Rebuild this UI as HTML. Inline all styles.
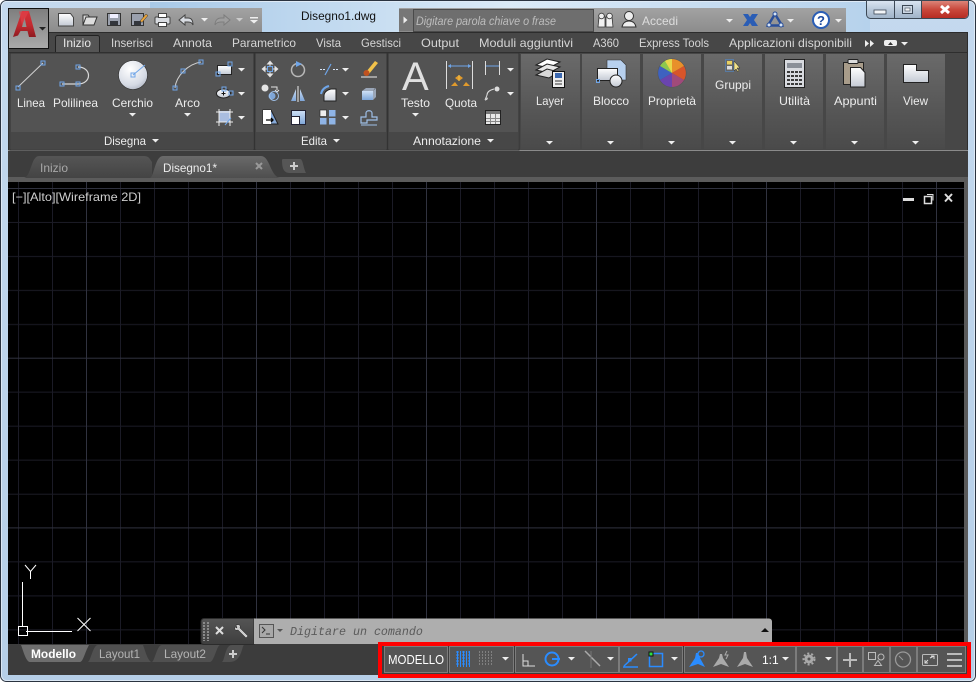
<!DOCTYPE html>
<html><head><meta charset="utf-8"><style>
html,body{margin:0;padding:0;background:#fff;width:976px;height:682px;overflow:hidden}
svg{display:block}
text{font-family:"Liberation Sans",sans-serif;font-size:12px;fill:#ececec}
.t{fill:#d6d6d6}
.d{fill:#b4b4b4}
</style></head><body>
<svg width="976" height="682" viewBox="0 0 976 682" xmlns="http://www.w3.org/2000/svg">
<defs>
<linearGradient id="frame" x1="0" y1="0" x2="0" y2="1"><stop offset="0" stop-color="#c4d9ee"/><stop offset="1" stop-color="#b6cfe8"/></linearGradient>
<linearGradient id="tb" x1="0" y1="0" x2="1" y2="0"><stop offset="0" stop-color="#a8c9e8"/><stop offset=".5" stop-color="#dbeaf7"/><stop offset="1" stop-color="#b6d2ec"/></linearGradient>
<linearGradient id="qa" x1="0" y1="0" x2="0" y2="1"><stop offset="0" stop-color="#a2a2a2"/><stop offset="1" stop-color="#8c8c8c"/></linearGradient>
<linearGradient id="abtn" x1="0" y1="0" x2="0" y2="1"><stop offset="0" stop-color="#7e7e7e"/><stop offset="1" stop-color="#aaaaaa"/></linearGradient>
<linearGradient id="panel" x1="0" y1="0" x2="0" y2="1"><stop offset="0" stop-color="#6a6a6a"/><stop offset=".6" stop-color="#565656"/><stop offset="1" stop-color="#4a4a4a"/></linearGradient>
<linearGradient id="tabA" x1="0" y1="0" x2="0" y2="1"><stop offset="0" stop-color="#6a6a6a"/><stop offset="1" stop-color="#4e4e4e"/></linearGradient>
<linearGradient id="tabI" x1="0" y1="0" x2="0" y2="1"><stop offset="0" stop-color="#555"/><stop offset="1" stop-color="#444"/></linearGradient>
<linearGradient id="paper" x1="0" y1="0" x2="0" y2="1"><stop offset="0" stop-color="#fff"/><stop offset="1" stop-color="#c4cad4"/></linearGradient>
<linearGradient id="blue" x1="0" y1="0" x2="0" y2="1"><stop offset="0" stop-color="#cfe0f5"/><stop offset="1" stop-color="#7ea6d8"/></linearGradient>
<radialGradient id="disc" cx=".4" cy=".3" r=".8"><stop offset="0" stop-color="#fff"/><stop offset=".7" stop-color="#d5dae4"/><stop offset="1" stop-color="#a8aebb"/></radialGradient>
<linearGradient id="red" x1="0" y1="0" x2="0" y2="1"><stop offset="0" stop-color="#d8323a"/><stop offset=".55" stop-color="#c22a30"/><stop offset="1" stop-color="#8e1a20"/></linearGradient>
<linearGradient id="winb" x1="0" y1="0" x2="0" y2="1"><stop offset="0" stop-color="#dbe6f2"/><stop offset=".5" stop-color="#b9c9da"/><stop offset="1" stop-color="#9fb3c8"/></linearGradient>
<linearGradient id="closeb" x1="0" y1="0" x2="0" y2="1"><stop offset="0" stop-color="#dc8478"/><stop offset=".5" stop-color="#c9483c"/><stop offset="1" stop-color="#b72c22"/></linearGradient>
<linearGradient id="cmdh" x1="0" y1="0" x2="0" y2="1"><stop offset="0" stop-color="#555"/><stop offset="1" stop-color="#3e3e3e"/></linearGradient>
<pattern id="grid" x="18" y="188" width="170" height="169.7" patternUnits="userSpaceOnUse">
<path d="M.5 0V170M34.5 0V170M68.5 0V170M102.5 0V170M136.5 0V170" stroke="#1b1b26" fill="none"/>
<path d="M0 .5H170M0 34.5H170M0 68.5H170M0 102.5H170M0 136.5H170" stroke="#1b1b26" fill="none"/>
<path d="M68.5 0V170" stroke="#30323f" fill="none"/>
<path d="M0 .5H170" stroke="#30323f" fill="none"/>
</pattern>
<g id="dd"><path d="M0 0h7l-3.500 3.500z" fill="#eee"/></g>
<g id="hq"><rect x="-2" y="-2" width="4" height="4" fill="none" stroke="#6fa5e8" stroke-width="1"/></g>
</defs>

<!-- window frame -->
<rect x="0.500" y="0.500" width="975" height="681" rx="6" fill="url(#frame)" stroke="#2a3340"/>
<rect x="1.500" y="1.500" width="973" height="679" rx="5" fill="none" stroke="#e9f1f9" stroke-opacity=".7"/>
<rect x="150" y="2" width="720" height="30" fill="url(#tb)"/>

<!-- main dark client -->
<rect x="8" y="32" width="960" height="643" fill="#3c3c3c"/>
<!-- QAT bar -->
<path d="M46 8H262V32H46z" fill="url(#qa)"/>
<!-- search / right bar -->
<rect x="399" y="8" width="447" height="24" fill="url(#qa)"/>
<rect x="399" y="9" width="14" height="22" fill="#777"/>
<path d="M403.500 16.500l4 3.500-4 3.500z" fill="#eee"/>
<rect x="413.500" y="9.500" width="180" height="22" fill="#6e6e6e" stroke="#4a4a4a"/>
<text x="416" y="25" textLength="140" lengthAdjust="spacingAndGlyphs" style="fill:#bdbdbd;font-style:italic">Digitare parola chiave o frase</text>
<text x="301" y="20" textLength="75" lengthAdjust="spacingAndGlyphs" style="fill:#111">Disegno1.dwg</text>

<!-- QAT icons -->
<path d="M58.500 13.500h12l3 4v8.500h-15z" fill="url(#paper)" stroke="#444"/>
<path d="M83 25l3-8h11l-3 8zM83 25v-10h5l1.500 2" fill="#ddd" stroke="#333"/>
<rect x="107.500" y="13.500" width="13" height="12" fill="#9aa0ad" stroke="#333"/><rect x="110" y="14" width="8" height="4" fill="#eef"/><rect x="110" y="21" width="8" height="4" fill="#33363c"/>
<rect x="131.500" y="13.500" width="12" height="12" fill="#9aa0ad" stroke="#333"/><rect x="134" y="21" width="7" height="4" fill="#33363c"/><path d="M140 21l6-7 2 1.500-6 7z" fill="#e8a33a" stroke="#333" stroke-width=".5"/>
<rect x="155" y="17" width="15" height="7" rx="1" fill="#d8dbe0" stroke="#444"/><rect x="158.500" y="13.500" width="8" height="4" fill="#fff" stroke="#444"/><rect x="158.500" y="22.500" width="8" height="4" fill="#fff" stroke="#444"/>
<path d="M179 20l6-5v3h3c4 0 5 3 5 7-1-2-2-3-5-3h-3v3z" fill="#d8dce2" stroke="#444"/>
<path d="M230 20l-6-5v3h-3c-4 0-6 3-6 7 1-2 3-3 6-3h3v3z" fill="#9e9e9e" stroke="#7d7d7d"/>
<use href="#dd" x="201" y="18"/><use href="#dd" x="236" y="18" opacity=".6"/>
<path d="M250 17h8v1.500h-8zM250 20h8l-4 3.500z" fill="#eee"/>

<!-- window buttons -->
<path d="M866.500 0.500h102v14a4 4 0 0 1-4 4h-94a4 4 0 0 1-4-4z" fill="url(#winb)" stroke="#3c4855"/>
<path d="M922 1h46v13a4 4 0 0 1-4 4h-42z" fill="url(#closeb)"/>
<path d="M894.500 1v17M921.500 1v17" stroke="#3c4855"/>
<rect x="874" y="10" width="12" height="4" fill="#f2f5f8" stroke="#3c4855" stroke-width=".8"/>
<rect x="902.500" y="5.500" width="10" height="8" fill="#cdd8e4" stroke="#3c4855"/><rect x="905" y="8" width="5" height="3" fill="#f2f5f8" stroke="#3c4855" stroke-width=".6"/>
<path d="M941 6l8 7M949 6l-8 7" stroke="#fff" stroke-width="3"/>

<!-- right bar icons -->
<g fill="#f0f0f0" stroke="#333" stroke-width=".8"><path d="M599 17h6v10h-7zM606 17h6l1 10h-7z"/><circle cx="601.500" cy="16" r="2.800"/><circle cx="609.500" cy="16" r="2.800"/></g>
<circle cx="629" cy="16" r="4.500" fill="#eee" stroke="#333"/><path d="M622 27c1-5 4-6 7-6s6 1 7 6z" fill="#eee" stroke="#333"/>
<text x="642" y="25" textLength="36" lengthAdjust="spacingAndGlyphs" style="fill:#ddd">Accedi</text>
<use href="#dd" x="726" y="19"/>
<path d="M743 14h5l2 3 2-3h6l-4 6 4 6h-6l-2-3-2 3h-5l4-6z" fill="#2a5db5"/>
<path d="M775 14l7 11.500h-14z" fill="none" stroke="#2a4f9a" stroke-width="2.500"/><circle cx="775" cy="14" r="2" fill="#d6e4f5" stroke="#2a4f9a"/><circle cx="769" cy="25" r="2" fill="#d6e4f5" stroke="#2a4f9a"/><circle cx="781" cy="25" r="2" fill="#d6e4f5" stroke="#2a4f9a"/>
<use href="#dd" x="787" y="19"/>
<circle cx="821" cy="20" r="8" fill="#fff" stroke="#2a5db5" stroke-width="2"/><text x="817" y="25" style="fill:#1d4aa0;font-weight:bold;font-size:13px">?</text>
<use href="#dd" x="835" y="19"/>

<!-- tab row -->
<rect x="8.500" y="32.500" width="959" height="20" fill="#474747" stroke="#2c2c2c"/>
<path d="M55.500 53V37.500a2 2 0 0 1 2-2h40a2 2 0 0 1 2 2V53" fill="#555" stroke="#222"/>
<text x="63" y="47" textLength="28" lengthAdjust="spacingAndGlyphs" style="fill:#e8e8e8">Inizio</text>
<text class="t" x="111" y="47" textLength="42" lengthAdjust="spacingAndGlyphs">Inserisci</text>
<text class="t" x="173" y="47" textLength="39" lengthAdjust="spacingAndGlyphs">Annota</text>
<text class="t" x="232" y="47" textLength="64" lengthAdjust="spacingAndGlyphs">Parametrico</text>
<text class="t" x="316" y="47" textLength="25" lengthAdjust="spacingAndGlyphs">Vista</text>
<text class="t" x="361" y="47" textLength="40" lengthAdjust="spacingAndGlyphs">Gestisci</text>
<text class="t" x="421" y="47" textLength="38" lengthAdjust="spacingAndGlyphs">Output</text>
<text class="t" x="479" y="47" textLength="94" lengthAdjust="spacingAndGlyphs">Moduli aggiuntivi</text>
<text class="t" x="593" y="47" textLength="26" lengthAdjust="spacingAndGlyphs">A360</text>
<text class="t" x="639" y="47" textLength="70" lengthAdjust="spacingAndGlyphs">Express Tools</text>
<text class="t" x="729" y="47" textLength="123" lengthAdjust="spacingAndGlyphs">Applicazioni disponibili</text>
<path d="M865 40l4 3.500-4 3.500zM870 40l4 3.500-4 3.500z" fill="#eee"/>
<rect x="884" y="40" width="13" height="6" rx="2" fill="#eee"/><path d="M888 45l2.500-3 2.500 3z" fill="#333"/>
<use href="#dd" x="901" y="42"/>

<!-- ribbon bg -->
<rect x="8.500" y="52.500" width="959" height="98" fill="#474747" stroke="#2e2e2e"/>
<rect x="8" y="150" width="960" height="1" fill="#8a8a8a"/>

<!-- expanded panels -->
<rect x="10" y="53" width="244" height="97" fill="#535353" stroke="#333"/>
<rect x="255" y="53" width="132" height="97" fill="#535353" stroke="#333"/>
<rect x="388" y="53" width="131" height="97" fill="#535353" stroke="#333"/>
<rect x="11" y="132" width="242" height="17" fill="#474747"/>
<rect x="256" y="132" width="130" height="17" fill="#474747"/>
<rect x="389" y="132" width="129" height="17" fill="#474747"/>
<text x="104" y="145" textLength="42" lengthAdjust="spacingAndGlyphs">Disegna</text><use href="#dd" x="152" y="139"/>
<text x="301" y="145" textLength="26" lengthAdjust="spacingAndGlyphs">Edita</text><use href="#dd" x="333" y="139"/>
<text x="413" y="145" textLength="68" lengthAdjust="spacingAndGlyphs">Annotazione</text><use href="#dd" x="487" y="139"/>

<!-- A button (above tab row and ribbon) -->
<rect x="8.500" y="8.500" width="40" height="40" fill="url(#abtn)" stroke="#111"/>
<path d="M13 37L22 11H29L36 37H29L27.500 31H20.500L18 35.500zM22 27H26.500L24.500 17z" fill="url(#red)" fill-rule="evenodd"/>
<path d="M19 11.500L29 11l-7 14z" fill="#e04048" opacity=".7"/>
<path d="M39 27h7l-3.500 3.500z" fill="#222"/>

<!-- collapsed panels -->
<g fill="url(#panel)"><rect x="521" y="54" width="59" height="95"/><rect x="582" y="54" width="58" height="95"/><rect x="643" y="54" width="58" height="95"/><rect x="704" y="54" width="58" height="95"/><rect x="765" y="54" width="58" height="95"/><rect x="826" y="54" width="58" height="95"/><rect x="887" y="54" width="58" height="95"/></g>
<use href="#dd" x="546" y="141"/><use href="#dd" x="607" y="141"/><use href="#dd" x="668" y="141"/><use href="#dd" x="729" y="141"/><use href="#dd" x="790" y="141"/><use href="#dd" x="851" y="141"/><use href="#dd" x="912" y="141"/>
<text x="536" y="105" textLength="28" lengthAdjust="spacingAndGlyphs">Layer</text>
<text x="593" y="105" textLength="36" lengthAdjust="spacingAndGlyphs">Blocco</text>
<text x="648" y="105" textLength="48" lengthAdjust="spacingAndGlyphs">Proprietà</text>
<text x="715" y="89" textLength="36" lengthAdjust="spacingAndGlyphs">Gruppi</text>
<text x="779" y="105" textLength="31" lengthAdjust="spacingAndGlyphs">Utilità</text>
<text x="834" y="105" textLength="43" lengthAdjust="spacingAndGlyphs">Appunti</text>
<text x="903" y="105" textLength="25" lengthAdjust="spacingAndGlyphs">View</text>

<!-- draw panel -->
<path d="M18 87L43 63" stroke="#d0d0d0"/><use href="#hq" x="18" y="88"/><use href="#hq" x="43" y="63"/>
<path d="M62 84H78C92 84 92 67 78 67" stroke="#d8d8d8" stroke-width="1.200" fill="none"/><use href="#hq" x="62" y="84"/><use href="#hq" x="78" y="84"/><use href="#hq" x="78" y="67"/>
<circle cx="133" cy="75" r="14.500" fill="url(#disc)" stroke="#333" stroke-width=".6"/><path d="M133 75L145 65" stroke="#6fa5e8"/><use href="#hq" x="133" y="75"/>
<path d="M175 88C176 76 188 64 201 62" stroke="#d0d0d0" fill="none"/><use href="#hq" x="175" y="88"/><use href="#hq" x="183" y="71"/><use href="#hq" x="201" y="62"/>
<text x="17" y="107" textLength="28" lengthAdjust="spacingAndGlyphs">Linea</text>
<text x="53" y="107" textLength="45" lengthAdjust="spacingAndGlyphs">Polilinea</text>
<text x="112" y="107" textLength="41" lengthAdjust="spacingAndGlyphs">Cerchio</text><use href="#dd" x="129" y="113"/>
<text x="175" y="107" textLength="25" lengthAdjust="spacingAndGlyphs">Arco</text><use href="#dd" x="184" y="113"/>
<rect x="217.500" y="65.500" width="14" height="9" fill="url(#paper)" stroke="#222"/><use href="#hq" x="218" y="74"/><use href="#hq" x="230" y="64"/>
<use href="#dd" x="238" y="68"/>
<ellipse cx="223.500" cy="93.500" rx="7" ry="4.500" fill="url(#paper)" stroke="#222"/><path d="M221.500 93.500h4M223.500 91.500v4" stroke="#111"/><use href="#hq" x="224" y="89"/><use href="#hq" x="231" y="93"/>
<use href="#dd" x="238" y="92"/>
<rect x="219" y="111" width="11" height="11" fill="#a9bde0"/><path d="M216 112h17M216 122h17M219 109v17M230 109v17" stroke="#eee"/><path d="M225 125l6-7" stroke="#6fa5e8"/>
<use href="#dd" x="238" y="116"/>

<!-- edit panel -->
<g fill="#e4e4e4"><path d="M270 60.500l3.500 4h-7zM270 77.500l3.500-4h-7zM261.500 69l4-3.500v7zM278.500 69l-4-3.500v7z"/></g><path d="M265 69h10M270 64v10" stroke="#e4e4e4"/><rect x="267.500" y="66.500" width="5" height="5" fill="#5b5b5b" stroke="#6fa5e8"/>
<circle cx="298" cy="70" r="6.500" fill="none" stroke="#b8b8b8" stroke-width="1.500"/><path d="M296 61l6 3-6 3z" fill="#6fa5e8"/>
<path d="M320 69.500h6M333 69.500h6" stroke="#d8e6f8" stroke-dasharray="2 1"/><path d="M325 75l6-11" stroke="#6fa5e8" stroke-width="1.200"/>
<use href="#dd" x="342" y="68"/>
<path d="M366 72l9-11 3 2-9 11z" fill="#f2c24a"/><circle cx="366.500" cy="73" r="3" fill="#c0521f"/><path d="M361 77h16" stroke="#eee"/>
<circle cx="265" cy="88" r="3.500" fill="#e4e4e4"/><path d="M271 87h6v3M275 90l2 2 2-2" stroke="#e4e4e4" fill="none"/><circle cx="272" cy="96" r="3.500" fill="#7ea6d8"/><circle cx="274" cy="96" r="4.500" fill="none" stroke="#9fc0e8"/>
<path d="M298 86v16" stroke="#eee"/><path d="M296 89v12h-5zM300 89v12h5z" fill="url(#blue)"/>
<path d="M321 94c1-5 4-7 8-8" stroke="#6fa5e8" stroke-width="2" fill="none"/><path d="M324 101v-5c0-4 3-6 7-7h5v12z" fill="url(#paper)" stroke="#222"/>
<use href="#dd" x="342" y="92"/>
<path d="M362 91l4-3h9l-2 3zM373 91l3-3v9l-3 3z" fill="#9aa6b8"/><rect x="362" y="91" width="11" height="9" fill="url(#blue)"/>
<path d="M263 110h8l7 14h-15z" fill="#86a9d8" stroke="#222"/><rect x="263" y="110" width="8" height="14" fill="#fff"/><path d="M266 120h7M271 118l2 2-2 2" stroke="#000" stroke-width="1.300" fill="none"/>
<rect x="291.500" y="110.500" width="14" height="14" fill="url(#blue)" stroke="#223"/><rect x="291.500" y="116.500" width="8" height="8" fill="#fff" stroke="#223"/>
<rect x="320" y="110" width="6.500" height="6.500" fill="#eee" stroke="#222" stroke-width=".6"/><rect x="329" y="110" width="6.500" height="6.500" fill="#8fb4e6"/><rect x="320" y="118" width="6.500" height="6.500" fill="#8fb4e6"/><rect x="329" y="118" width="6.500" height="6.500" fill="#8fb4e6"/>
<use href="#dd" x="342" y="116"/>
<path d="M361 123v-6h5v-4c0-3 6-3 6 0v4h5v3h-10v3z" fill="none" stroke="#9fc0e8" stroke-width="1.200"/><path d="M361 125h16" stroke="#9fc0e8"/>

<!-- annotation panel -->
<text x="402" y="90" style="font-size:40px;fill:#e0e0e0">A</text>
<text x="401" y="107" textLength="29" lengthAdjust="spacingAndGlyphs">Testo</text><use href="#dd" x="412" y="113"/>
<path d="M446.500 61v28M472.500 61v28" stroke="#ddd"/><path d="M448 66h23" stroke="#6fa5e8"/><path d="M448 66l3-2v4zM471 66l-3-2v4z" fill="#6fa5e8"/>
<path d="M451 86l4-4 3 4zM455 78l4 3 4-3-4-3zM463 86l3-4 4 4z" fill="#e09a2c"/><path d="M459 75v6" stroke="#f2c24a"/>
<text x="445" y="107" textLength="32" lengthAdjust="spacingAndGlyphs">Quota</text>
<path d="M485.500 61v14M499.500 61v14" stroke="#ddd"/><path d="M486 66h13" stroke="#6fa5e8"/>
<use href="#dd" x="507" y="68"/>
<path d="M485 100l2-5h0c0-3 3-5 7-6" stroke="#ddd" fill="none"/><circle cx="497" cy="89" r="2.500" fill="#ddd"/><path d="M485 101l3-2-1-2z" fill="#ddd"/>
<use href="#dd" x="507" y="92"/>
<rect x="485.500" y="110.500" width="15" height="14" fill="#e8e8e8" stroke="#222"/><rect x="486" y="111" width="14" height="3" fill="#777"/><path d="M490.500 114v10M495.500 114v10M486 118.500h14M486 121.500h14" stroke="#888"/>

<!-- Layer icon -->
<path d="M536 65l11-6 13 3-11 6z" fill="#fff" stroke="#222"/><path d="M536 70l11-6 13 3-11 6z" fill="#e8e8e8" stroke="#222"/><path d="M536 75l11-6 8 2v3l-6 4z" fill="#d8d8d8" stroke="#222"/>
<rect x="552.500" y="71.500" width="12" height="16" fill="#eee" stroke="#111"/><rect x="555" y="73" width="7" height="5" fill="#3b68b0"/><path d="M555 81h7M555 84h7" stroke="#333"/>
<!-- Blocco icon -->
<path d="M607 60h14l5 5v15h-19z" fill="#b7d0ee" stroke="#333" stroke-width=".6"/><rect x="597.500" y="68.500" width="20" height="12" fill="url(#paper)" stroke="#222"/><circle cx="616" cy="81" r="6" fill="url(#paper)" stroke="#222"/><rect x="596.500" y="79.500" width="3" height="3" fill="none" stroke="#6fa5e8"/>
<!-- Proprieta icon -->
<circle cx="672" cy="73" r="14.500" fill="#555"/>
<path d="M672 73L672 59A14 14 0 0 1 684 66z" fill="#e8902a"/><path d="M672 73L684 66A14 14 0 0 1 684 80z" fill="#d8552a"/><path d="M672 73L684 80A14 14 0 0 1 672 87z" fill="#a04a7a"/><path d="M672 73L672 87A14 14 0 0 1 660 80z" fill="#6a44ae"/><path d="M672 73L660 80A14 14 0 0 1 660 66z" fill="#3e62c0"/><path d="M672 73L660 66A14 14 0 0 1 672 59z" fill="#8cc84e"/>
<path d="M672 73L672 59A14 14 0 0 0 665 61z" fill="#e8d84a"/>
<!-- Gruppi -->
<rect x="725.500" y="59.500" width="8" height="12" fill="none" stroke="#4d8fe0" stroke-dasharray="1 1"/><rect x="727" y="61" width="5" height="3.500" fill="#e8d060"/><rect x="727" y="66" width="5" height="3.500" fill="#ddd"/><path d="M734 61v10l2-2 2 3 1-1-2-3h3z" fill="#f2e28a" stroke="#222" stroke-width=".5"/>
<!-- Utilita -->
<rect x="784.500" y="59.500" width="20" height="28" fill="#d8dadf" stroke="#222"/><rect x="787" y="63" width="15" height="5" fill="#8a8f98"/>
<path d="M787 72h15M787 76h15M787 80h15M787 84h15" stroke="#3a3a3a" stroke-width="2"/><path d="M790.500 71v15M794.500 71v15M798.500 71v15" stroke="#d8dadf"/>
<!-- Appunti -->
<rect x="843.500" y="62.500" width="20" height="22" fill="#a89c8a" stroke="#222"/><rect x="848" y="59.500" width="10" height="4" rx="1" fill="#ddd" stroke="#222"/><path d="M850.500 67.500h10l4.500 5v14.500h-14.500z" fill="url(#paper)" stroke="#222"/>
<!-- View -->
<path d="M903.500 64.500h13v6h12v12h-25z" fill="url(#paper)" stroke="#222"/>

<!-- doc tabs row -->
<rect x="8" y="151" width="960" height="27" fill="#3d3d3d"/>
<rect x="8" y="177" width="960" height="5" fill="#5c5c5c"/>
<path d="M24 178c7-1 7-22 15-22h104c6 0 6 2 9 6v16z" fill="url(#tabI)"/>
<path d="M150 178c4-1 5-22 13-22h98c9 0 9 20 19 22z" fill="url(#tabA)"/>
<path d="M282 160c0-1 1-1 2-1h16c3 0 3 8 6 14h-16c-6 0-8-4-8-13z" fill="#565656"/>
<text x="40" y="172" textLength="28" lengthAdjust="spacingAndGlyphs" style="fill:#a8a8a8">Inizio</text>
<text x="163" y="172" textLength="54" lengthAdjust="spacingAndGlyphs">Disegno1*</text>
<path d="M256 163l6 6M262 163l-6 6" stroke="#999" stroke-width="2"/>
<path d="M294 162v8M290 166h8" stroke="#ccc" stroke-width="2"/>

<!-- viewport -->
<rect x="8" y="182" width="956" height="462" fill="#000"/>
<rect x="8" y="182" width="956" height="462" fill="url(#grid)"/>
<rect x="964" y="178" width="4" height="470" fill="#5a5a5a"/>
<text x="12" y="201" textLength="129" lengthAdjust="spacingAndGlyphs" style="fill:#cfcfcf;font-size:12px">[−][Alto][Wireframe 2D]</text>
<rect x="903" y="198" width="11" height="3" fill="#ddd"/>
<rect x="924.500" y="196.500" width="7" height="7" fill="none" stroke="#ddd" stroke-width="1.500"/><path d="M927 194.500h6v6" stroke="#ddd" fill="none"/>
<path d="M945 194l7 7.500M952 194l-7 7.500" stroke="#ddd" stroke-width="2"/>

<!-- UCS -->
<path d="M22.500 582V626M26 631.500H72" stroke="#fff"/>
<rect x="18.500" y="626.500" width="9" height="9" fill="none" stroke="#fff"/>
<path d="M25 565l5.500 6.500 5.500-6.500M30.500 571v8" stroke="#fff" fill="none"/>
<path d="M77.500 618l13 13M90.500 618l-13 13" stroke="#fff"/>

<!-- command line -->
<path d="M254 618.500H204a3 3 0 0 0-3 3v20a3 3 0 0 0 3 3h50z" fill="url(#cmdh)" stroke="#2c2c2c"/>
<path d="M254 618.500H769a3 3 0 0 1 3 3V644H254z" fill="#aeaeae"/>
<path d="M204 622v19M208 622v19" stroke="#8a8a8a" stroke-width="2" stroke-dasharray="2 1"/>
<path d="M216 627l7 7M223 627l-7 7" stroke="#ddd" stroke-width="2"/>
<path d="M236 625c3-1 5 0 4 3l8 8-2 2-8-8c-3 1-4-1-3-3l2 1z" fill="#ccc" stroke="#222" stroke-width=".5"/>
<rect x="259.500" y="624.500" width="14" height="13" fill="#a8a8a8" stroke="#555"/><path d="M262 627l3 3-3 3M266 634h4" stroke="#333" fill="none"/>
<path d="M277 629h6l-3 3z" fill="#555"/>
<text x="290" y="635" style="font-family:'Liberation Mono',monospace;font-style:italic;font-size:11.670px;fill:#5a5a5a">Digitare un comando</text>
<path d="M761 632l4-4 4 4z" fill="#111"/>

<!-- layout tabs -->
<path d="M8 645H21c2 5 5 17 9 17H80c3 0 5-10 9-17z" fill="#6e6e6e"/>
<path d="M88 662c3-2 5-17 10-17h45c2 5 5 17 9 17z" fill="#505050"/>
<path d="M152 662c3-2 5-17 10-17h58c-3 0-6 17-10 17z" fill="#505050"/>
<path d="M222 662c3-2 3-17 10-17h12c-2 0-2 17-14 17z" fill="#505050"/>
<text x="31" y="658" textLength="45" lengthAdjust="spacingAndGlyphs" style="fill:#fff;font-weight:bold">Modello</text>
<text x="99" y="658" textLength="41" lengthAdjust="spacingAndGlyphs" style="fill:#b4b4b4">Layout1</text>
<text x="164" y="658" textLength="42" lengthAdjust="spacingAndGlyphs" style="fill:#b4b4b4">Layout2</text>
<path d="M233 650v8M229 654h8" stroke="#ccc" stroke-width="2"/>

<!-- status bar red box -->
<rect x="380" y="644" width="589" height="32" fill="#3c3c3c" stroke="#f00" stroke-width="4"/>
<g fill="#555" stroke="#7c7c7c">
<rect x="384.500" y="646.500" width="63" height="26"/>
<rect x="449.500" y="646.500" width="64" height="26"/>
<rect x="515.500" y="646.500" width="103" height="26"/>
<rect x="619.500" y="646.500" width="63" height="26"/>
<rect x="684.500" y="646.500" width="111" height="26"/>
<rect x="796.500" y="646.500" width="40" height="26"/>
<rect x="837.500" y="646.500" width="25" height="26"/>
<rect x="863.500" y="646.500" width="26" height="26"/>
<rect x="890.500" y="646.500" width="26" height="26"/>
<rect x="917.500" y="646.500" width="48" height="26"/>
</g>
<rect x="942" y="647" width="1" height="25" fill="#555"/>
<text x="388" y="664" textLength="56" lengthAdjust="spacingAndGlyphs" style="fill:#fff;font-size:12.500px">MODELLO</text>
<!-- grid -->
<path d="M456 652H469M456 655H469M456 658H469M456 661H469M456 664H469" stroke="#2a8cff" stroke-dasharray="1 1"/><path d="M457.500 651V667M460.500 651V667M463.500 651V667M466.500 651V667M469.500 651V667" stroke="#2a8cff"/>
<path d="M479 652H492M479 655H492M479 658H492M479 661H492M479 664H492" stroke="#aaa" stroke-dasharray="1 2"/>
<use href="#dd" x="502" y="657"/>
<!-- ortho etc -->
<path d="M523 654V666H535M523 661H528V666" stroke="#ddd" fill="none"/>
<circle cx="552" cy="659" r="6.500" fill="none" stroke="#2a8cff" stroke-width="2"/><path d="M552 659h8" stroke="#2a8cff" stroke-width="2"/>
<use href="#dd" x="568" y="657"/>
<path d="M585 651L600 666" stroke="#aaa" stroke-width="1.500"/><path d="M591 651V668" stroke="#777"/>
<use href="#dd" x="607" y="657"/>
<path d="M623 667H638M624 666L637 654" stroke="#2a8cff" stroke-width="1.500"/><rect x="628" y="658" width="3.500" height="3.500" fill="#2a8cff"/>
<rect x="649.500" y="653.500" width="13" height="13" fill="none" stroke="#2a8cff" stroke-width="1.500"/><rect x="649" y="652" width="4" height="4" fill="#30e040" stroke="#111"/>
<use href="#dd" x="671" y="657"/>
<!-- annotation -->
<path d="M689 667l6-9 1-5h3l1 5 5 9-7-3z" fill="#2a8cff"/><circle cx="701" cy="654" r="3" fill="#555" stroke="#2a8cff" stroke-width="1.300"/>
<path d="M713 667l6-9 1-4h2l1 4 6 9-8-3z" fill="#aaa"/><path d="M727 651l-2 4h3l-2 4" stroke="#aaa" fill="none"/>
<path d="M737 667l6-9 1-6h2l1 6 6 9-8-3z" fill="#aaa"/>
<text x="762" y="664" style="fill:#fff;font-size:12px">1:1</text>
<use href="#dd" x="782" y="657"/>
<!-- gear -->
<circle cx="809" cy="659" r="4.500" fill="#aaa"/><circle cx="809" cy="659" r="5.500" fill="none" stroke="#aaa" stroke-width="2" stroke-dasharray="2 2"/><circle cx="809" cy="659" r="1.500" fill="#555"/>
<use href="#dd" x="825" y="657"/>
<path d="M850 653V667M843 660H857" stroke="#bbb" stroke-width="2"/>
<rect x="868.500" y="652.500" width="7" height="7" fill="none" stroke="#bbb"/><circle cx="881" cy="657" r="3" fill="none" stroke="#bbb"/><path d="M874.500 665.500l3.500-5 3.500 5z" fill="none" stroke="#bbb"/>
<circle cx="903" cy="659.500" r="7.500" fill="none" stroke="#999" stroke-width="1.300"/><path d="M899 656l4 4" stroke="#999"/>
<rect x="922.500" y="654.500" width="15" height="11" rx="1" fill="none" stroke="#bbb"/><path d="M925 663l3-3M925 660v3h3M930 658l4-2M931 656h3v3" stroke="#ddd" fill="none"/>
<path d="M947 654H962M947 660H962M947 666H962" stroke="#bbb" stroke-width="2"/>
</svg>
</body></html>
